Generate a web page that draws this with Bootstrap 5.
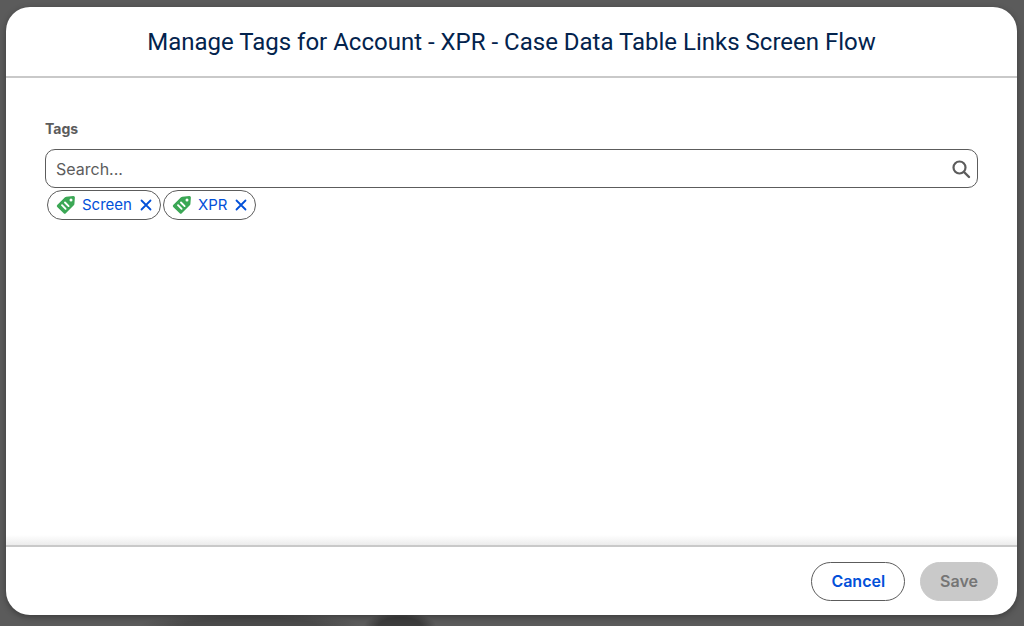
<!DOCTYPE html>
<html lang="en">
<head>
<meta charset="utf-8">
<meta name="viewport" content="width=device-width, initial-scale=1">
<title>Manage Tags</title>
<link href="https://cdn.jsdelivr.net/npm/bootstrap@5.3.0/dist/css/bootstrap.min.css" rel="stylesheet">
<style>
  body { font-family: Inter, "Liberation Sans", sans-serif; background: #5b5b5b; color: #5c5c5c; }
  .backdrop-page { padding: 7px 7px 11px 6px; background: radial-gradient(ellipse 36px 14px at 400px 100%, #3c3c3c 60%, transparent) , radial-gradient(ellipse 110px 14px at 250px 100%, #4a4a4a 60%, transparent); }
  .dialog { background: #fff; border: 0; border-radius: 24px; box-shadow: 0 2px 6px rgba(0, 0, 0, .35); overflow: hidden; }
  .dialog-head { height: 71px; border-bottom: 2px solid #c9c9c9; border-radius: 0; }
  .dialog-title { font-family: Roboto, Inter, sans-serif; font-size: 24px; line-height: 30px; font-weight: 400; color: #03234d; }
  .dialog-main { padding: 41px 39px; background: linear-gradient(to top, #ececec, #fff 10px); }
  .field-label { font-size: 14px; line-height: 20px; font-weight: 700; margin-bottom: 10px; }
  .search-input { height: 39px; padding: 0 40px 0 10px; font-size: 16px; border: 1px solid #5c5c5c; border-radius: 10px; color: #5c5c5c; }
  .search-input::placeholder { color: #5c5c5c; }
  .search-icon { right: 7px; top: 10px; }
  .tag-list { gap: 2px; margin: 2px 0 0 2px; }
  .tag-pill { height: 30px; padding: 0 8px; border: 1px solid #5c5c5c; border-radius: 15px; background: #fff; }
  .tag-pill a { font-size: 15px; line-height: 20px; color: #0250d9; margin: 0 8px 0 6px; }
  .tag-remove { color: #0250d9; }
  .dialog-foot { height: 70px; padding: 0 19px; gap: 15px; border-top: 2px solid #c9c9c9; border-radius: 0; }
  .dialog-foot .btn { height: 39px; margin: 0; padding: 0 19px; font-size: 16px; line-height: 20px; font-weight: 600; border-radius: 20px; }
  .dialog-foot .btn-cancel { color: #0250d9; border: 1px solid #5c5c5c; background: #fff; }
  .btn-save:disabled { color: #757575; background: #c9c9c9; border-color: #c9c9c9; opacity: 1; }
</style>
<script src="https://cdn.jsdelivr.net/npm/bootstrap@5.3.0/dist/js/bootstrap.bundle.min.js"></script>
</head>
<body>
<svg class="d-none" aria-hidden="true">
  <symbol id="tag" viewBox="0 0 20 20">
    <path fill="#3ba755" d="M10.300 1.700 17.300 1.100Q18.900 1 18.900 2.600L18.400 9Q18.300 9.700 17.800 10.200L9.800 18.200Q8.700 19.200 7.700 18.200L1.200 11.900Q.3 10.900 1.200 10L9 2.300Q9.600 1.700 10.300 1.700Z"/>
    <circle cx="15" cy="5" r="1.500" fill="#fff"/>
    <path fill="none" stroke="#fff" stroke-width="1.900" stroke-linecap="round" d="m6 10.200 3.600 3.600M9 7.500l3.600 3.600"/>
  </symbol>
  <symbol id="cross" viewBox="0 0 12 12">
    <path stroke="currentColor" stroke-width="1.800" stroke-linecap="round" d="m1.500 1.500 9 9m0-9-9 9"/>
  </symbol>
</svg>
<div class="backdrop-page d-flex min-vh-100">
  <section class="dialog modal-content flex-grow-1" role="dialog" aria-labelledby="title">
    <header class="dialog-head modal-header justify-content-center p-0">
      <h1 class="dialog-title modal-title" id="title">Manage Tags for Account - XPR - Case Data Table Links Screen Flow</h1>
    </header>
    <main class="dialog-main modal-body">
      <label class="field-label d-block" for="search">Tags</label>
      <div class="position-relative">
        <input class="search-input form-control" id="search" type="text" placeholder="Search...">
        <svg class="search-icon position-absolute" width="20" height="20" viewBox="0 0 20 20" fill="none" stroke="#5c5c5c" aria-hidden="true">
          <circle cx="8.500" cy="8.500" r="6" stroke-width="2.200"/>
          <path d="m13 13 5 5" stroke-width="2.400" stroke-linecap="round"/>
        </svg>
      </div>
      <ul class="tag-list list-unstyled d-flex flex-wrap">
        <li class="tag-pill d-flex align-items-center">
          <svg width="20" height="20" aria-hidden="true"><use href="#tag"/></svg>
          <a class="text-decoration-none" href="#">Screen</a>
          <button class="tag-remove btn d-flex border-0 p-0" type="button" aria-label="Remove Screen"><svg width="12" height="12"><use href="#cross"/></svg></button>
        </li>
        <li class="tag-pill d-flex align-items-center">
          <svg width="20" height="20" aria-hidden="true"><use href="#tag"/></svg>
          <a class="text-decoration-none" href="#">XPR</a>
          <button class="tag-remove btn d-flex border-0 p-0" type="button" aria-label="Remove XPR"><svg width="12" height="12"><use href="#cross"/></svg></button>
        </li>
      </ul>
    </main>
    <footer class="dialog-foot modal-footer">
      <button class="btn btn-cancel" type="button">Cancel</button>
      <button class="btn btn-save" type="button" disabled>Save</button>
    </footer>
  </section>
</div>
</body>
</html>
